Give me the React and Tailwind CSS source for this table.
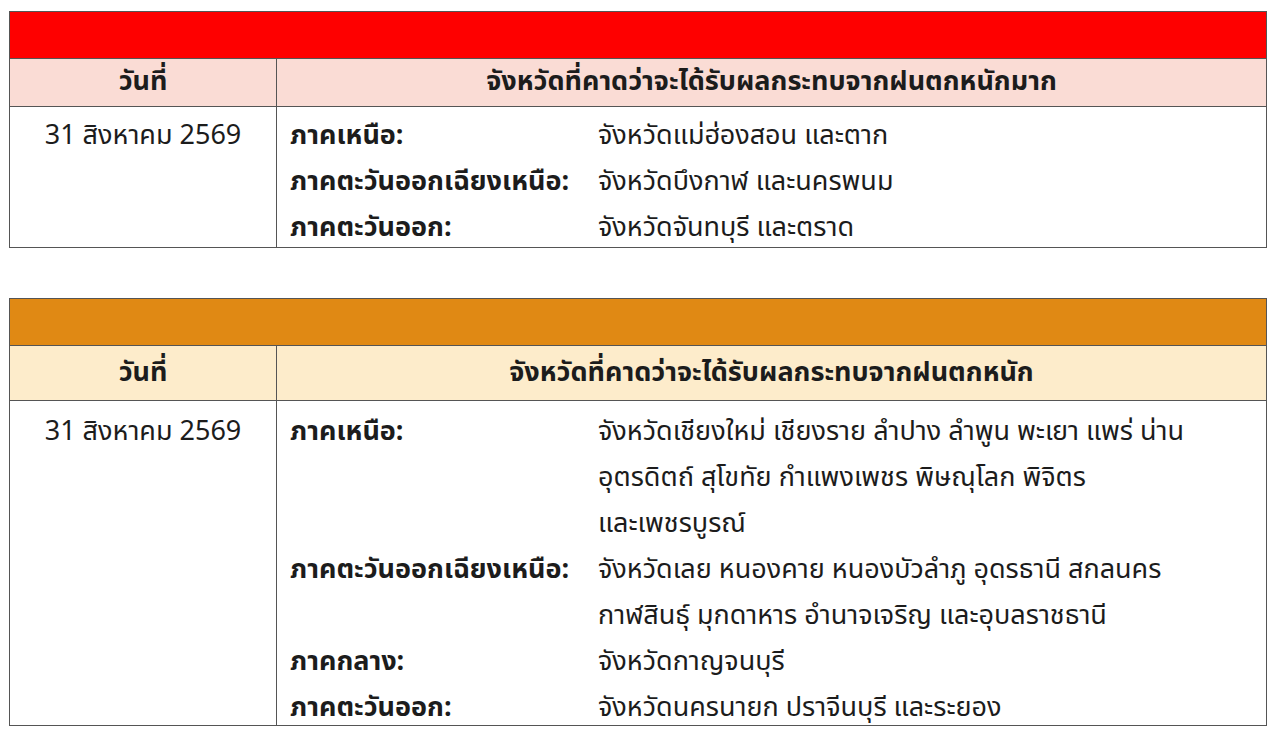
const tables = [
  {
    bar: "bg-[#fe0000]",
    head: "bg-[#fadcd5]",
    headH: "h-[48px]",
    bodyPad: "pt-[6px]",
    bodyPull: "-mb-[4px]",
    title: "จังหวัดที่คาดว่าจะได้รับผลกระทบจากฝนตกหนักมาก",
    date: "31 สิงหาคม 2569",
    rows: [
      { label: "ภาคเหนือ:", lines: ["จังหวัดแม่ฮ่องสอน และตาก"] },
      { label: "ภาคตะวันออกเฉียงเหนือ:", lines: ["จังหวัดบึงกาฬ และนครพนม"] },
      { label: "ภาคตะวันออก:", lines: ["จังหวัดจันทบุรี และตราด"] },
    ],
  },
  {
    bar: "bg-[#e08914]",
    head: "bg-[#fdeccb]",
    headH: "h-[55px]",
    bodyPad: "pt-[8px]",
    bodyPull: "-mb-[6px]",
    title: "จังหวัดที่คาดว่าจะได้รับผลกระทบจากฝนตกหนัก",
    date: "31 สิงหาคม 2569",
    rows: [
      {
        label: "ภาคเหนือ:",
        lines: [
          "จังหวัดเชียงใหม่ เชียงราย ลำปาง ลำพูน พะเยา แพร่ น่าน",
          "อุตรดิตถ์ สุโขทัย กำแพงเพชร พิษณุโลก พิจิตร",
          "และเพชรบูรณ์",
        ],
      },
      {
        label: "ภาคตะวันออกเฉียงเหนือ:",
        lines: [
          "จังหวัดเลย หนองคาย หนองบัวลำภู อุดรธานี สกลนคร",
          "กาฬสินธุ์ มุกดาหาร อำนาจเจริญ และอุบลราชธานี",
        ],
      },
      { label: "ภาคกลาง:", lines: ["จังหวัดกาญจนบุรี"] },
      { label: "ภาคตะวันออก:", lines: ["จังหวัดนครนายก ปราจีนบุรี และระยอง"] },
    ],
  },
];

function RainTable({ t }) {
  return (
    <div className="w-[1258px] border border-[#555] flex flex-col">
      <div className={`${t.bar} h-[47px] border-b border-[#555]`}></div>
      <div className={`${t.head} ${t.headH} flex border-b border-[#555] font-bold text-[27px]`}>
        <div className="w-[267px] flex items-center justify-center border-r border-[#555]">วันที่</div>
        <div className="flex-1 flex items-center justify-center">{t.title}</div>
      </div>
      <div className="flex text-[27px] leading-[46px]">
        <div className={`w-[267px] text-center border-r border-[#555] ${t.bodyPad}`}>{t.date}</div>
        <div className={`flex-1 pl-[13px] ${t.bodyPad}`}>
          <div className={`flex flex-col ${t.bodyPull}`}>
            {t.rows.map((r, i) => (
              <div key={i} className="flex">
                <div className="w-[308px] shrink-0 font-bold">{r.label}</div>
                <div className="flex flex-col">
                  {r.lines.map((l, j) => (
                    <div key={j}>{l}</div>
                  ))}
                </div>
              </div>
            ))}
          </div>
        </div>
      </div>
    </div>
  );
}

export default function App() {
  return (
    <div
      className="w-[1280px] h-[736px] bg-white text-[#1c1c1c] pl-[9px] pt-[11px] flex flex-col gap-[50px]"
      style={{ fontFamily: '"Noto Sans Thai", Tahoma, "Noto Sans", "DejaVu Sans", sans-serif' }}
    >
      {tables.map((t, i) => (
        <RainTable key={i} t={t} />
      ))}
    </div>
  );
}
